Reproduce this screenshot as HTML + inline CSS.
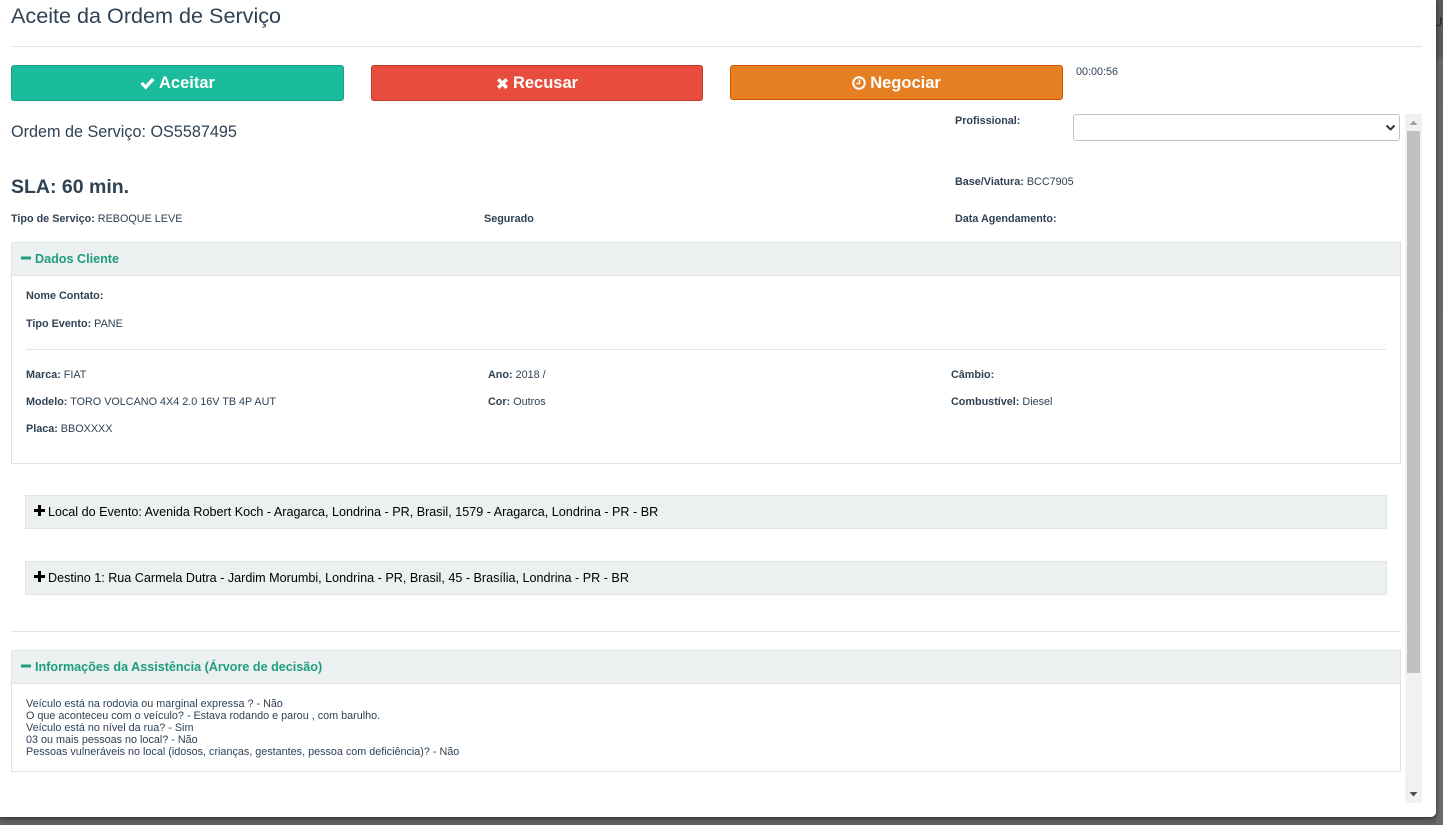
<!DOCTYPE html>
<html lang="pt-BR"><head><meta charset="utf-8"><title>Aceite da Ordem de Serviço</title>
<style>
html,body{margin:0;padding:0;width:1443px;height:825px;overflow:hidden;background:#5f5f5f;font-family:"Liberation Sans",Arial,sans-serif;color:#2f4254}
.abs,.t,.b,.btn,.panel,.hr{position:absolute}
#bg1{position:absolute;left:1436px;top:0;width:7px;height:825px;overflow:hidden;background:linear-gradient(#5a5a5a 0,#5a5a5a 57px,#666 58px,#6a6a6a 825px)}
#bg1 span{position:absolute;left:-3px;top:15px;font-size:13px;line-height:14px;color:#222}
#modal{position:absolute;left:0;top:0;width:1436px;height:817px;background:#fff;border-bottom-right-radius:5px;box-shadow:0 1px 4px rgba(0,0,0,.6)}
.t{white-space:nowrap;font-size:10.8px;line-height:12px}
.t b{font-weight:700}
.hr{height:1px;background:#e2e4e4}
.btn{height:34px;border-radius:3px;color:#fff;font-weight:700;font-size:16.5px;line-height:35px;text-align:center;border:1px solid}
.btn svg{vertical-align:-2px;margin-right:4px}
.head{position:absolute;background:#ecf0f1;border:1px solid #e0e3e3;box-sizing:border-box}
.panel{border:1px solid #dfe2e2;box-sizing:border-box}
.green{color:#1f9d7f;font-weight:700;font-size:12.6px;line-height:14px}
.black{color:#000;font-size:12.6px;line-height:14px}
</style></head><body>
<div id="bg1"><span>U</span></div>
<div id="modal">
<div class="t" style="left:11px;top:4px;font-size:21.6px;line-height:24px;position:absolute">Aceite da Ordem de Serviço</div>
<div class="hr" style="left:11px;top:46px;width:1411px"></div>

<div class="btn" style="left:11px;top:65px;width:331px;background:#1abc9c;border-color:#16a085"><svg width="15" height="13" viewBox="0 0 15 13"><path d="M0.500 7l2.200-2.200 3 3 6.300-7 2.500 2.300-8.800 9.400z" fill="#fff"/></svg>Aceitar</div>
<div class="btn" style="left:371px;top:65px;width:330px;background:#e74c3c;border-color:#c0392b"><svg width="13" height="13" viewBox="0 0 13 13"><path d="M1 3.500L3.500 1 6.500 4 9.500 1 12 3.500 9 6.500 12 9.500 9.500 12 6.500 9 3.500 12 1 9.500 4 6.500z" fill="#fff"/></svg>Recusar</div>
<div class="btn" style="left:730px;top:65px;width:331px;height:33px;line-height:35px;background:#e67e22;border-color:#d35400"><svg width="14" height="14" viewBox="0 0 14 14"><circle cx="7" cy="7" r="5.800" fill="none" stroke="#fff" stroke-width="2"/><path d="M7.500 3.500v4h-3" fill="none" stroke="#fff" stroke-width="1.500"/></svg>Negociar</div>
<div class="t" style="left:1076px;top:66px">00:00:56</div>

<div class="t" style="left:11px;top:123px;font-size:16.2px;line-height:19px">Ordem de Serviço: OS5587495</div>
<div class="t" style="left:11px;top:176px;font-size:19.5px;line-height:23px;font-weight:700">SLA: 60 min.</div>
<div class="t" style="left:11px;top:213px"><b>Tipo de Serviço:</b> REBOQUE LEVE</div>
<div class="t" style="left:484px;top:213px"><b>Segurado</b></div>
<div class="t" style="left:955px;top:213px"><b>Data Agendamento:</b></div>
<div class="t" style="left:955px;top:115px"><b>Profissional:</b></div>
<div class="t" style="left:955px;top:176px"><b>Base/Viatura:</b> BCC7905</div>

<div class="abs" style="left:1073px;top:114px;width:327px;height:27px;box-sizing:border-box;border:1px solid #c4c4c4;border-radius:3px;background:#fff"></div>
<svg class="abs" style="left:1385px;top:124px" width="11" height="8" viewBox="0 0 11 8"><path d="M1.500 1.500l4 4 4-4" fill="none" stroke="#333" stroke-width="2"/></svg>

<!-- scrollbar -->
<div class="abs" style="left:1405px;top:114px;width:17px;height:689px;background:#f1f1f1"></div>
<div class="abs" style="left:1407px;top:131px;width:13px;height:542px;background:#c1c1c1"></div>
<svg class="abs" style="left:1409px;top:120px" width="9" height="6"><path d="M0.500 5h8l-4-4.500z" fill="#a3a3a3"/></svg>
<svg class="abs" style="left:1409px;top:791px" width="9" height="6"><path d="M0.500 1h8l-4 4.500z" fill="#505050"/></svg>

<!-- Dados Cliente -->
<div class="panel" style="left:11px;top:242px;width:1390px;height:222px"></div>
<div class="head" style="left:11px;top:242px;width:1390px;height:34px"></div>
<svg class="abs" style="left:21px;top:256px" width="10" height="4"><rect width="10" height="3" y=".5" rx=".5" fill="#1f9d7f"/></svg>
<div class="t green" style="left:35px;top:252px">Dados Cliente</div>
<div class="t" style="left:26px;top:290px"><b>Nome Contato:</b></div>
<div class="t" style="left:26px;top:318px"><b>Tipo Evento:</b> PANE</div>
<div class="hr" style="left:26px;top:349px;width:1360px"></div>
<div class="t" style="left:26px;top:369px"><b>Marca:</b> FIAT</div>
<div class="t" style="left:26px;top:396px"><b>Modelo:</b> TORO VOLCANO 4X4 2.0 16V TB 4P AUT</div>
<div class="t" style="left:26px;top:423px"><b>Placa:</b> BBOXXXX</div>
<div class="t" style="left:488px;top:369px"><b>Ano:</b> 2018 /</div>
<div class="t" style="left:488px;top:396px"><b>Cor:</b> Outros</div>
<div class="t" style="left:951px;top:369px"><b>Câmbio:</b></div>
<div class="t" style="left:951px;top:396px"><b>Combustível:</b> Diesel</div>

<!-- Local / Destino -->
<div class="head" style="left:25px;top:495px;width:1362px;height:34px"></div>
<svg class="abs" style="left:34px;top:505px" width="11" height="11"><path d="M4 0h3v4h4v3H7v4H4V7H0V4h4z" fill="#000"/></svg>
<div class="t black" style="left:48px;top:505px">Local do Evento: Avenida Robert Koch - Aragarca, Londrina - PR, Brasil, 1579 - Aragarca, Londrina - PR - BR</div>
<div class="head" style="left:25px;top:561px;width:1362px;height:34px"></div>
<svg class="abs" style="left:34px;top:571px" width="11" height="11"><path d="M4 0h3v4h4v3H7v4H4V7H0V4h4z" fill="#000"/></svg>
<div class="t black" style="left:48px;top:571px">Destino 1: Rua Carmela Dutra - Jardim Morumbi, Londrina - PR, Brasil, 45 - Brasília, Londrina - PR - BR</div>

<div class="hr" style="left:11px;top:631px;width:1390px"></div>

<!-- Informações -->
<div class="panel" style="left:11px;top:650px;width:1390px;height:122px"></div>
<div class="head" style="left:11px;top:650px;width:1390px;height:34px"></div>
<svg class="abs" style="left:21px;top:664px" width="10" height="4"><rect width="10" height="3" y=".5" rx=".5" fill="#1f9d7f"/></svg>
<div class="t green" style="left:35px;top:660px">Informações da Assistência (Árvore de decisão)</div>
<div class="t" style="left:26px;top:698px">Veículo está na rodovia ou marginal expressa ? - Não</div>
<div class="t" style="left:26px;top:710px">O que aconteceu com o veículo? - Estava rodando e parou , com barulho.</div>
<div class="t" style="left:26px;top:722px">Veículo está no nível da rua? - Sim</div>
<div class="t" style="left:26px;top:734px">03 ou mais pessoas no local? - Não</div>
<div class="t" style="left:26px;top:746px">Pessoas vulneráveis no local (idosos, crianças, gestantes, pessoa com deficiência)? - Não</div>
</div>
</body></html>
